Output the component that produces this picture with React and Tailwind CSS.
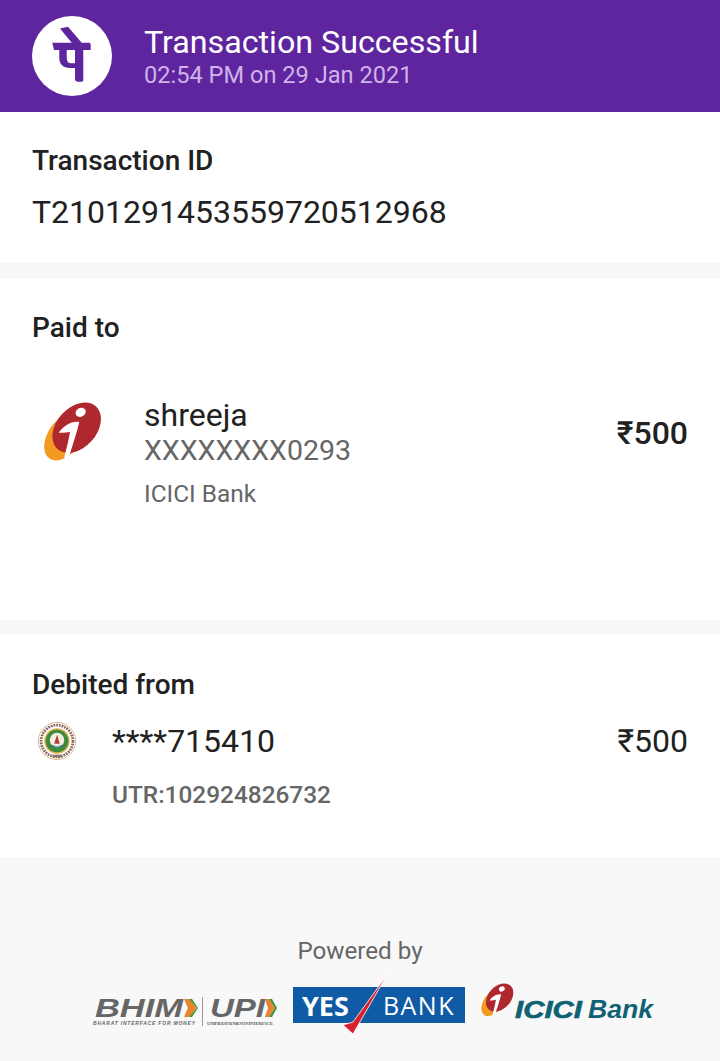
import React from 'react';

function IciciMark({ className }) {
  return (
    <svg viewBox="60 60 192 192" className={className}>
      <ellipse cx="134" cy="170" rx="80" ry="50" transform="rotate(-55 134 170)" fill="#f39a22" />
      <ellipse cx="170" cy="143" rx="86" ry="60" transform="rotate(-48 170 143)" fill="#ae282e" />
      <ellipse cx="182" cy="97" rx="16" ry="13" transform="rotate(-30 182 97)" fill="#fff" />
      <path d="M116 158 C130 138 155 122 178 126 C170 160 158 195 146 232 C140 240 130 238 134 226 C140 205 146 180 150 156 C140 156 125 160 116 158 Z" fill="#fff" />
    </svg>
  );
}

function PhonePeMark() {
  return (
    <svg viewBox="0 0 80 80" className="w-20 h-20 shrink-0">
      <circle cx="40" cy="40" r="40" fill="#fff" />
      <path d="M28 12.5 L36 10.7 L49.7 26.7 H57 Q58.7 26.7 58.7 28.5 V34 H51.3 V64 Q51.3 65.7 49.5 65.7 H46 Q43 65.7 43 62.5 V52 H38 C31 52 27.3 48 27.3 42 V34 H22 L20.3 26.7 H39.7 Z M34.7 34 V42 C34.7 45.5 36.5 47.3 39 47.3 H43 V34 Z" fill="#5f259f" fillRule="evenodd" />
    </svg>
  );
}

function CollegeSeal() {
  return (
    <svg viewBox="0 0 44 44" className="w-10 h-10 shrink-0">
      <circle cx="22" cy="22" r="20.5" fill="#fff" stroke="#d3b483" strokeWidth="1" />
      <circle cx="22" cy="22" r="17.5" fill="none" stroke="#8a6a60" strokeWidth="3" strokeDasharray="2 1" />
      <circle cx="22" cy="22" r="14" fill="#e8b04a" />
      <circle cx="22" cy="22" r="12.5" fill="#3c8a3e" />
      <circle cx="22" cy="21" r="8" fill="#f3efe0" />
      <path d="M22 15 L25 25 H19 Z" fill="#b23a3a" />
      <path d="M16 26 q6 3 12 0 v2 h-12 Z" fill="#2f5fa8" />
      <rect x="17" y="37" width="10" height="3" fill="#8a7a6a" />
    </svg>
  );
}

function BhimUpi() {
  return (
    <svg viewBox="0 0 186 30" className="w-[186px] h-[30px] shrink-0 mt-[14px] overflow-visible">
      <text x="2" y="20" fontFamily="Liberation Sans, sans-serif" fontStyle="italic" fontWeight="700" fontSize="25" textLength="88" lengthAdjust="spacingAndGlyphs" fill="#666">BHIM</text>
      <path d="M91 2 h5 l8 9 -8 9 h-5 l4 -9 Z" fill="#e8842c" />
      <path d="M96 2 l8 9 -8 9 h3 l6 -9 -6 -9 Z" fill="#3f9142" />
      <text x="0" y="28" fontFamily="Liberation Sans, sans-serif" fontStyle="italic" fontWeight="700" fontSize="5" textLength="102" fill="#666">BHARAT INTERFACE FOR MONEY</text>
      <rect x="109" y="0" width="1" height="29" fill="#9a9a9a" />
      <text x="117" y="20" fontFamily="Liberation Sans, sans-serif" fontStyle="italic" fontWeight="700" fontSize="25" textLength="55" lengthAdjust="spacingAndGlyphs" fill="#666">UPI</text>
      <path d="M172 2 h4 l6 9 -6 9 h-4 l3 -9 Z" fill="#e8842c" />
      <path d="M176 2 l6 9 -6 9 h3 l5 -9 -5 -9 Z" fill="#3f9142" />
      <text x="114" y="28" fontFamily="Liberation Serif, serif" fontWeight="700" fontSize="5" textLength="66" fill="#666">UNIFIED PAYMENTS INTERFACE</text>
    </svg>
  );
}

function YesBank() {
  return (
    <div className="relative w-[172px] h-9 bg-[#0f5ba6] flex items-center justify-between pl-[9px] pr-[10px] shrink-0 font-['Open_Sans',sans-serif] text-white leading-none">
      <span className="font-bold text-[27px]">YES</span>
      <span className="font-normal text-[25px] tracking-[1.5px]">BANK</span>
      <svg viewBox="0 -12 172 60" className="absolute left-0 -top-3 w-[172px] h-[60px]">
        <path d="M94 -12 L60 47 L50 38 L60 35 Z" fill="#d8232f" stroke="#fff" strokeWidth="0.8" />
      </svg>
    </div>
  );
}

function IciciBank() {
  return (
    <div className="flex items-center shrink-0">
      <IciciMark className="w-9 h-9 -mt-[10px]" />
      <svg viewBox="0 0 140 26" className="w-[140px] h-[26px] overflow-visible">
        <text x="0" y="26" fontFamily="Liberation Sans, sans-serif" fontStyle="italic" fontWeight="700" fontSize="23" textLength="67" lengthAdjust="spacingAndGlyphs" fill="#0f6273" stroke="#0f6273" strokeWidth="0.6">ICICI</text>
        <text x="73" y="26" fontFamily="Liberation Sans, sans-serif" fontStyle="italic" fontWeight="700" fontSize="25" textLength="65" lengthAdjust="spacingAndGlyphs" fill="#0f6273">Bank</text>
      </svg>
    </div>
  );
}

export default function App() {
  return (
    <div className="w-[720px] h-[1061px] overflow-hidden bg-[#f8f8f8] font-['Roboto',sans-serif] text-[#212121] flex flex-col">
      {/* Header */}
      <div className="h-28 bg-[#5f259f] flex items-center pl-8 gap-8 shrink-0">
        <PhonePeMark />
        <div>
          <p className="text-[32.2px] leading-9 text-white">Transaction Successful</p>
          <p className="text-[23.6px] leading-7 mt-[1px] text-[#cfb3ea]">02:54 PM on 29 Jan 2021</p>
        </div>
      </div>

      {/* Transaction ID */}
      <div className="h-[151px] bg-white px-8 pt-[33px] shrink-0">
        <p className="text-[28px] leading-8 font-medium">Transaction ID</p>
        <p className="text-[32px] leading-9 mt-[17px]">T2101291453559720512968</p>
      </div>

      {/* Paid to */}
      <div className="h-[341px] bg-white mt-4 px-8 pt-[33px] shrink-0">
        <p className="text-[28px] leading-8 font-medium">Paid to</p>
        <div className="flex items-start mt-[53px]">
          <div className="w-28 shrink-0 pl-2 pt-[3px]">
            <IciciMark className="w-16 h-16" />
          </div>
          <div className="flex-1">
            <p className="text-[32px] leading-9">shreeja</p>
            <p className="text-[28.5px] leading-8 mt-[2px] text-[#666]">XXXXXXXX0293</p>
            <p className="text-[24.4px] leading-7 text-[#666] mt-[13px]">ICICI Bank</p>
          </div>
          <p className="text-[32px] leading-9 font-medium mt-[18px]">₹500</p>
        </div>
      </div>

      {/* Debited from */}
      <div className="h-[222px] bg-white mt-[15px] px-8 pt-[34px] shrink-0">
        <p className="text-[28px] leading-8 font-medium">Debited from</p>
        <div className="flex items-start mt-[22px]">
          <div className="w-20 shrink-0 pl-[5px] -mt-[2px]">
            <CollegeSeal />
          </div>
          <div className="flex-1">
            <p className="text-[32px] leading-9">****715410</p>
            <p className="text-[24.4px] leading-7 font-medium text-[#666] mt-[22px]">UTR:102924826732</p>
          </div>
          <p className="text-[32px] leading-9">₹500</p>
        </div>
      </div>

      {/* Footer */}
      <div className="flex-1 flex flex-col items-center pt-[80px]">
        <p className="text-[24.2px] leading-7 text-[#666]">Powered by</p>
        <div className="flex items-center h-9 mt-[22px] pl-7">
          <BhimUpi />
          <div className="ml-[14px]"><YesBank /></div>
          <div className="ml-[14px]"><IciciBank /></div>
        </div>
      </div>
    </div>
  );
}
